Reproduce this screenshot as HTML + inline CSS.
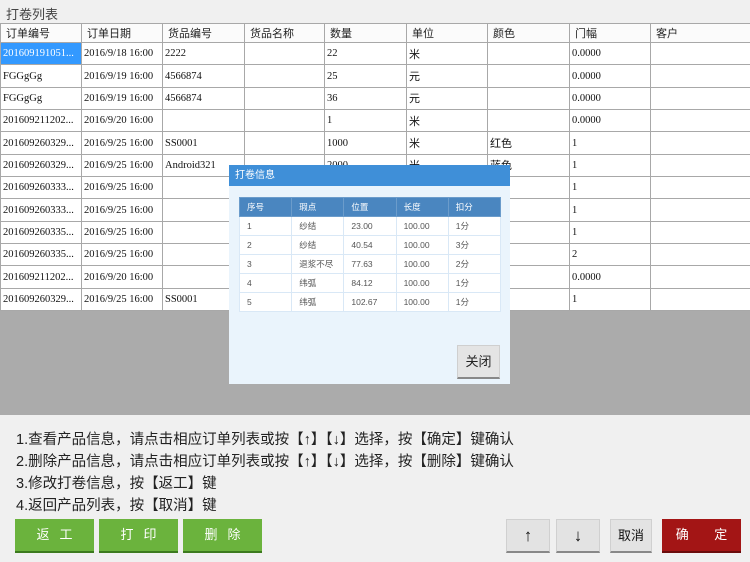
<!DOCTYPE html>
<html><head><meta charset="utf-8"><style>
*{margin:0;padding:0;box-sizing:border-box}
body{width:750px;height:562px;background:#f0f0f0;position:relative;overflow:hidden;font-family:"Liberation Sans","Noto Sans CJK SC",sans-serif}
.t{position:absolute;left:6px;top:4px;font-size:13px;color:#444}
table.g{position:absolute;left:0;top:23px;border-collapse:collapse;table-layout:fixed;width:750px}
table.g td{border:1px solid #a8a8a8;height:22.35px;font-family:"Liberation Serif","Noto Sans CJK SC",serif;font-size:10.5px;color:#111;padding-left:2px;white-space:nowrap;overflow:hidden;background:#fff}
table.g tr.h td{height:19px;font-family:"Liberation Sans","Noto Sans CJK SC",sans-serif;font-size:11px;color:#222;padding-left:5px;background:#fbfbfb}
table.g td.sel{background:#3399ff;color:#fff}
table.g td.cn{font-family:"Liberation Sans","Noto Sans CJK SC",sans-serif;font-size:11px}
.gray{position:absolute;left:0;top:311px;width:750px;height:104px;background:#ababab}
.dlg{position:absolute;left:229px;top:165px;width:281px;height:219px;background:#eaf4fc}
.dt{height:21px;background:#3f8fd8;color:#fff;font-size:10px;line-height:21px;padding-left:6px}
table.d{position:absolute;left:10px;top:32px;width:262px;border-collapse:collapse;table-layout:fixed;font-size:8.5px;color:#555}
table.d td{border:1px solid #d9e8f6;height:19px;padding-left:7px;background:#fff}
table.d tr.h td{background:#4a86c0;color:#fff;border-color:#6b9ccb}
.cb{position:absolute;left:228px;top:180px;width:43px;height:34px;background:#e4e4e4;border:1px solid #cfcfcf;border-bottom:2px solid #888;font-size:13px;line-height:31px;text-align:center;color:#222}
.tx{position:absolute;left:16px;font-size:14.5px;color:#222}
.b{position:absolute;top:519px;height:34px;line-height:31px;text-align:center;font-size:13px}
.gr{background:#6bb33d;color:#fff;border-bottom:2px solid #3c7a1e;width:79px;letter-spacing:10px;text-indent:10px}
.gy{background:#e3e3e3;color:#111;border:1px solid #d0d0d0;border-bottom:2px solid #888}
.rd{background:#a31515;color:#fff;border-bottom:2px solid #6b0c0c;width:79px;word-spacing:22px}
</style></head><body>
<div class="t">打卷列表</div>
<table class="g">
<colgroup><col style="width:81px"><col style="width:81px"><col style="width:82px"><col style="width:80px"><col style="width:82px"><col style="width:81px"><col style="width:82px"><col style="width:81px"><col style="width:100px"></colgroup>
<tr class="h"><td>订单编号</td><td>订单日期</td><td>货品编号</td><td>货品名称</td><td>数量</td><td>单位</td><td>颜色</td><td>门幅</td><td>客户</td></tr>
<tr><td class="sel">201609191051...</td><td>2016/9/18 16:00</td><td>2222</td><td></td><td>22</td><td class="cn">米</td><td></td><td>0.0000</td><td></td></tr>
<tr><td>FGGgGg</td><td>2016/9/19 16:00</td><td>4566874</td><td></td><td>25</td><td class="cn">元</td><td></td><td>0.0000</td><td></td></tr>
<tr><td>FGGgGg</td><td>2016/9/19 16:00</td><td>4566874</td><td></td><td>36</td><td class="cn">元</td><td></td><td>0.0000</td><td></td></tr>
<tr><td>201609211202...</td><td>2016/9/20 16:00</td><td></td><td></td><td>1</td><td class="cn">米</td><td></td><td>0.0000</td><td></td></tr>
<tr><td>201609260329...</td><td>2016/9/25 16:00</td><td>SS0001</td><td></td><td>1000</td><td class="cn">米</td><td class="cn">红色</td><td>1</td><td></td></tr>
<tr><td>201609260329...</td><td>2016/9/25 16:00</td><td>Android321</td><td></td><td>2000</td><td class="cn">米</td><td class="cn">蓝色</td><td>1</td><td></td></tr>
<tr><td>201609260333...</td><td>2016/9/25 16:00</td><td></td><td></td><td></td><td></td><td></td><td>1</td><td></td></tr>
<tr><td>201609260333...</td><td>2016/9/25 16:00</td><td></td><td></td><td></td><td></td><td></td><td>1</td><td></td></tr>
<tr><td>201609260335...</td><td>2016/9/25 16:00</td><td></td><td></td><td></td><td></td><td></td><td>1</td><td></td></tr>
<tr><td>201609260335...</td><td>2016/9/25 16:00</td><td></td><td></td><td></td><td></td><td></td><td>2</td><td></td></tr>
<tr><td>201609211202...</td><td>2016/9/20 16:00</td><td></td><td></td><td></td><td></td><td></td><td>0.0000</td><td></td></tr>
<tr><td>201609260329...</td><td>2016/9/25 16:00</td><td>SS0001</td><td></td><td></td><td></td><td></td><td>1</td><td></td></tr>
</table>
<div class="gray"></div>
<div class="dlg"><div class="dt">打卷信息</div>
<table class="d">
<tr class="h"><td>序号</td><td>瑕点</td><td>位置</td><td>长度</td><td>扣分</td></tr>
<tr><td>1</td><td>纱结</td><td>23.00</td><td>100.00</td><td>1分</td></tr>
<tr><td>2</td><td>纱结</td><td>40.54</td><td>100.00</td><td>3分</td></tr>
<tr><td>3</td><td>退浆不尽</td><td>77.63</td><td>100.00</td><td>2分</td></tr>
<tr><td>4</td><td>纬弧</td><td>84.12</td><td>100.00</td><td>1分</td></tr>
<tr><td>5</td><td>纬弧</td><td>102.67</td><td>100.00</td><td>1分</td></tr>
</table>
<div class="cb">关闭</div></div>
<div class="tx" style="top:428px">1.查看产品信息，请点击相应订单列表或按【↑】【↓】选择，按【确定】键确认</div>
<div class="tx" style="top:450px">2.删除产品信息，请点击相应订单列表或按【↑】【↓】选择，按【删除】键确认</div>
<div class="tx" style="top:472px">3.修改打卷信息，按【返工】键</div>
<div class="tx" style="top:494px">4.返回产品列表，按【取消】键</div>
<div class="b gr" style="left:15px">返工</div>
<div class="b gr" style="left:99px">打印</div>
<div class="b gr" style="left:183px">删除</div>
<div class="b gy" style="left:506px;width:44px;font-size:17px">↑</div>
<div class="b gy" style="left:556px;width:44px;font-size:17px">↓</div>
<div class="b gy" style="left:610px;width:42px">取消</div>
<div class="b rd" style="left:662px">确 定</div>
</body></html>
